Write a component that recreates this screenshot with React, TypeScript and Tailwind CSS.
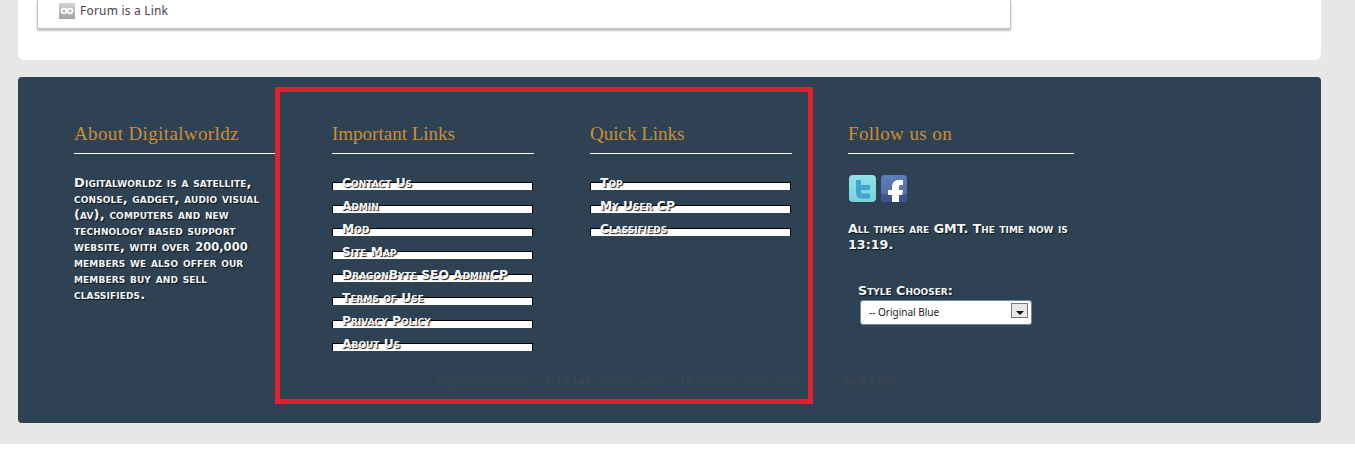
import React from 'react';

const importantLinks = ['Contact Us', 'Admin', 'Mod', 'Site Map', 'DragonByte SEO AdminCP', 'Terms of Use', 'Privacy Policy', 'About Us'];
const quickLinks = ['Top', 'My User CP', 'Classifieds'];

const footerText = "[font-family:'DejaVu_Sans',sans-serif] [font-variant:small-caps] font-bold text-[#f2f6f8] [text-shadow:1px_1px_1px_#0b1116]";

const Heading = ({ title, className }: { title: string; className: string }) => (
  <h3 className={`${className} h-[34px] border-b border-white text-[19px] leading-[28px] text-[#d08d30] [font-family:'Liberation_Serif',serif]`}>
    {title}
  </h3>
);

const LinkList = ({ links }: { links: string[] }) => (
  <ul className="mt-[28px] flex w-[201px] flex-col gap-[15px]">
    {links.map(link => (
      <li key={link} className="h-[8px] border-x border-t border-black bg-white">
        <a href="#" className={`${footerText} -mt-[7px] block whitespace-nowrap pl-[9px] text-[12.3px] leading-[14px]`}>
          {link}
        </a>
      </li>
    ))}
  </ul>
);

const App: React.FC = () => {
  return (
    <div className="h-[456px] overflow-hidden bg-white">
      <div className="h-[444px] bg-[#e7e7e7] px-[18px] pr-[34px]">
        {/* top of the forum block, scrolled out of view */}
        <div className="h-[60px] rounded-b-[6px] bg-white pl-[19px]">
          <div className="flex h-[29px] w-[974px] items-start gap-[5px] border-x border-b border-[#c4c4c4] bg-white pl-[21px] pt-[3px] shadow-[0_2px_2px_rgba(0,0,0,0.25)]">
            <svg width="16" height="16" viewBox="0 0 16 16">
              <defs>
                <linearGradient id="linkTile" x1="0" y1="0" x2="0" y2="1">
                  <stop offset="0" stopColor="#d4d4d4" />
                  <stop offset="1" stopColor="#a2a2a2" />
                </linearGradient>
              </defs>
              <rect width="16" height="16" fill="url(#linkTile)" />
              <circle cx="5" cy="8" r="2.4" fill="none" stroke="#fff" strokeWidth="1.5" />
              <circle cx="11" cy="8" r="2.4" fill="none" stroke="#fff" strokeWidth="1.5" />
            </svg>
            <span className="text-[12px] leading-[15px] tracking-[0.2px] text-[#4a4550] [font-family:'Noto_Sans',sans-serif]">Forum is a Link</span>
          </div>
        </div>

        <footer className="relative mt-[17px] h-[346px] rounded-[4px] bg-[#2f4254] pl-[56px] pt-[43px]">
          <div className="flex">
            <div className="w-[258px]">
              <Heading title="About Digitalworldz" className="w-[201px] tracking-[0.37px]" />
              <p className={`${footerText} mt-[21px] w-[190px] text-[13px] leading-[16px] tracking-[0.12px]`}>
                Digitalworldz is a satellite, console, gadget, audio visual (av), computers and new technology based support website, with over <span className="ml-px text-[11.5px] tracking-normal">200,000</span> members we also offer our members buy and sell classifieds.
              </p>
            </div>
            <div className="w-[258px]">
              <Heading title="Important Links" className="w-[202px]" />
              <LinkList links={importantLinks} />
            </div>
            <div className="w-[258px]">
              <Heading title="Quick Links" className="w-[202px]" />
              <LinkList links={quickLinks} />
            </div>
            <div className="w-[226px]">
              <Heading title="Follow us on" className="w-[226px] tracking-[0.4px]" />
              <div className="mt-[21px] flex gap-[5px] pl-px">
                <svg width="27" height="27" viewBox="0 0 27 27">
                  <defs>
                    <linearGradient id="twTile" x1="0" y1="0" x2="0" y2="1">
                      <stop offset="0" stopColor="#8fe3ea" />
                      <stop offset="1" stopColor="#7ad2dc" />
                    </linearGradient>
                  </defs>
                  <rect width="27" height="27" rx="4" fill="url(#twTile)" />
                  <path d="M7 5h5v5h9v5h-9v2c0 1 1 1.500 2 1.500h7v5h-9c-4 0-5-3-5-6z" fill="#3fa6cf" />
                </svg>
                <svg width="26" height="27" viewBox="0 0 26 27">
                  <defs>
                    <linearGradient id="fbTile" x1="0" y1="0" x2="0" y2="1">
                      <stop offset="0" stopColor="#5f7fb8" />
                      <stop offset="1" stopColor="#4a68a6" />
                    </linearGradient>
                  </defs>
                  <rect width="26" height="27" rx="4" fill="url(#fbTile)" />
                  <path d="M0 19h26v4a4 4 0 0 1-4 4H4a4 4 0 0 1-4-4z" fill="#3a5590" />
                  <path d="M11 27v-7H7v-5h4v-3c0-4 2.500-7 6.500-7H22v5h-2.500c-1 0-1.500.7-1.500 2v3h4l-.7 5H18v7z" fill="#fff" />
                </svg>
              </div>
              <p className={`${footerText} mt-[19px] text-[12.7px] leading-[16px]`}>
                All times are GMT. The time now is 13:19.
              </p>
              <div className="mt-[31px] pl-[10px]">
                <label className={`${footerText} block text-[12.7px] leading-[14px]`}>Style Chooser:</label>
                <div className="relative ml-[2px] h-[25px] w-[172px]">
                  <select className="h-full w-full appearance-none rounded-[3px] border border-[#6f8aa0] bg-white pl-[8px] pt-px text-[10px] text-[#222] [font-family:'Noto_Sans',sans-serif]">
                    <option>-- Original Blue</option>
                  </select>
                  <span className="pointer-events-none absolute right-[4px] top-[5px] flex h-[15px] w-[17px] items-end justify-center border border-[#777] bg-[#e8e8e8] pb-[2px]">
                    <svg width="8" height="4" viewBox="0 0 8 4"><path d="M0 0h8L4 4z" fill="#111" /></svg>
                  </span>
                </div>
              </div>
            </div>
          </div>

          <p className="absolute inset-x-0 top-[297px] whitespace-nowrap pl-[419px] text-[11px] leading-[14px] text-[#3c4650] [font-family:'Noto_Sans',sans-serif]">
            Page generated in <b className="ml-[10px] tracking-[1px]">0.12345</b> seconds with <b className="ml-[14px]">12</b> queries, Server time <span className="ml-[42px] font-bold">36.8.1.800</span>
          </p>

          {/* red annotation drawn over the screenshot */}
          <div className="absolute left-[257px] top-[10px] h-[317px] w-[538px] border-[5px] border-[#dc2430]" />
        </footer>
      </div>
    </div>
  );
};

export default App;
